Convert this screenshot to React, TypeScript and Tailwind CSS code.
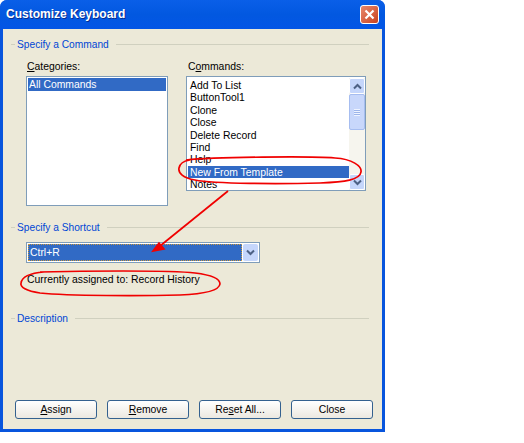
const FONT = "font-['Liberation_Sans',Arial,sans-serif]";

const COMMANDS = ["Add To List", "ButtonTool1", "Clone", "Close", "Delete Record", "Find", "Help", "New From Template", "Notes"];

function Chevron({ up = false }: { up?: boolean }) {
  return (
    <svg width="9" height="7" viewBox="0 0 9 7">
      <path d={up ? "M1 5.5 4.5 2 8 5.5" : "M1 1.5 4.5 5 8 1.5"} fill="none" stroke="#4d6185" strokeWidth="2" />
    </svg>
  );
}

function SectionHead({ label, className = "" }: { label: React.ReactNode; className?: string }) {
  return (
    <div className={`flex items-center ${className}`}>
      <div className="h-px w-[4px] bg-[#d0d0bf]" />
      <span className="px-[2px] text-[10.2px] text-[#0046d5]">{label}</span>
      <div className="ml-[5px] h-px flex-1 bg-[#d0d0bf]" />
    </div>
  );
}

function Btn({ children }: { children: React.ReactNode }) {
  return (
    <button className="flex h-[19px] w-[82px] items-center justify-center rounded-[3px] border border-[#34618f] bg-gradient-to-b from-white to-[#ece8e0] text-black">
      {children}
    </button>
  );
}

function Annotations() {
  return (
    <svg className="pointer-events-none absolute left-0 top-0" width="385" height="432" fill="none" stroke="#f00000" strokeWidth="1.7">
      <path d="M186 160C215 157 310 156 335 158 352 159 362 166 361 172 360 180 345 182 320 183 280 184 215 184 195 180 183 178 178 173 179 168 180 163 183 161 190 160" />
      <path d="M40 272C80 271 170 270 195 273 212 275 220 279 220 284 219 291 205 294 180 295 140 296 70 296 40 293 26 291 20 287 21 283 22 277 30 273 44 272" />
      <path d="M228 191 160 246" />
      <path d="M153 251 159 243 164 249Z" fill="#f00000" />
    </svg>
  );
}

export default function App() {
  return (
    <div className={`relative h-[443px] w-[524px] bg-white text-[10.4px] leading-[13px] text-black ${FONT}`}>
      <div className="flex h-[432px] w-[385px] flex-col overflow-hidden rounded-t-[7px] bg-[#0855dd]">
        <div className="flex h-[29px] shrink-0 items-center justify-between bg-gradient-to-b from-[#0a5fe8] via-[#0258e0] to-[#0355e6] pl-[6px] pr-[6px]">
          <span className="text-[12px] font-bold text-white [text-shadow:1px_1px_0_#0a2f90]">Customize Keyboard</span>
          <div className="flex h-[19px] w-[19px] items-center justify-center rounded-[3px] border border-white bg-gradient-to-br from-[#e8876a] to-[#c8401c]">
            <svg width="11" height="11" viewBox="0 0 11 11">
              <path d="M1.5 1.5 9.5 9.5M9.5 1.5 1.5 9.5" stroke="white" strokeWidth="2.2" />
            </svg>
          </div>
        </div>

        <div className="mx-[3px] mb-[3px] flex flex-1 flex-col bg-[#ece9d8] pl-[8px] pr-[13px] pt-[9px]">
          <SectionHead label="Specify a Command" />

          <div className="mt-[9px] flex pl-[15px]">
            <div className="w-[142px]">
              <div className="mb-[3px] pl-[1px]"><u>C</u>ategories:</div>
              <div className="h-[130px] border border-[#7f9db9] bg-white p-[1px]">
                <div className="h-[13px] bg-[#316ac5] pl-[1px] text-white">All Commands</div>
              </div>
            </div>

            <div className="ml-[18px] w-[180px]">
              <div className="mb-[3px] pl-[2px]">C<u>o</u>mmands:</div>
              <div className="flex h-[115px] border border-[#7f9db9] bg-white pl-[1px] pt-[2px]">
                <div className="min-w-0 flex-1 overflow-hidden">
                  {COMMANDS.map((c) => (
                    <div
                      key={c}
                      className={`h-[12.4px] pl-[2px] ${c === "New From Template" ? "bg-[#316ac5] text-white" : ""}`}
                    >
                      {c}
                    </div>
                  ))}
                </div>
                <div className="-mt-[1px] flex w-[16px] flex-col bg-[#f6f5ee]">
                  <div className="flex h-[16px] items-center justify-center rounded-[2px] border border-white bg-[#c5d6fb]"><Chevron up /></div>
                  <div className="flex h-[36px] items-center justify-center rounded-[2px] border border-[#a6bdf0] bg-[#c8d7fb]">
                    <div className="h-[7px] w-[6px] bg-[repeating-linear-gradient(to_bottom,#eef3ff_0,#eef3ff_1px,#9db5ea_1px,#9db5ea_2px)]" />
                  </div>
                  <div className="flex-1" />
                  <div className="flex h-[16px] items-center justify-center rounded-[2px] border border-white bg-[#c5d6fb]"><Chevron /></div>
                </div>
              </div>
            </div>
          </div>

          <SectionHead className="mt-[15px]" label={<>Specify a Shortcut</>} />

          <div className="ml-[15px] mt-[8px] flex h-[21px] w-[234px] items-center border border-[#7f9db9] bg-white p-[1px]">
            <div className="flex h-full flex-1 items-center border border-dotted border-[#ce9a3a] bg-[#316ac5] pl-[1px] text-white">Ctrl+R</div>
            <div className="ml-[1px] flex h-full w-[15px] items-center justify-center rounded-[2px] bg-[#c5d6fb]"><Chevron /></div>
          </div>

          <div className="ml-[16px] mt-[10px]">Currently assigned to: Record History</div>

          <SectionHead className="mt-[26px]" label="Description" />

          <div className="-mr-[4px] mb-[10px] mt-auto flex gap-[10px] pl-[4px]">
            <Btn><u>A</u>ssign</Btn>
            <Btn><u>R</u>emove</Btn>
            <Btn>Re<u>s</u>et All...</Btn>
            <Btn>Close</Btn>
          </div>
        </div>
      </div>
      <Annotations />
    </div>
  );
}
